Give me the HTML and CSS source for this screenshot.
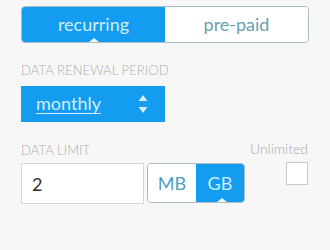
FILE: index.html
```html
<!DOCTYPE html>
<html>
<head>
<meta charset="utf-8">
<link rel="stylesheet" href="styles.css">
</head>
<body>
<div class="panel">
  <div class="segmented">
    <div class="seg seg-on">recurring<span class="notch-down"></span></div>
    <div class="seg seg-off">pre-paid</div>
  </div>

  <div class="label renew-label">DATA RENEWAL PERIOD</div>
  <div class="select">
    <span class="select-text">monthly</span>
    <svg class="arrows" width="10" height="20" viewBox="0 0 10 20">
      <path d="M5 1 L9.5 7 L0.5 7 Z" fill="#d4eefc"/>
      <path d="M5 19 L9.5 13 L0.5 13 Z" fill="#d4eefc"/>
    </svg>
  </div>

  <div class="limit">
    <div class="limit-left">
      <div class="label">DATA LIMIT</div>
      <div class="limit-row">
        <div class="input">2</div>
        <div class="units">
          <div class="unit unit-off">MB</div>
          <div class="unit unit-on">GB<span class="notch-up"></span></div>
        </div>
      </div>
    </div>
    <div class="limit-right">
      <div class="unl">Unlimited</div>
      <div class="checkbox"></div>
    </div>
  </div>
</div>
</body>
</html>
```

FILE: styles.css
```css
html, body {
  margin: 0;
  padding: 0;
  background: #f7f7f7;
}
body {
  font-family: Lato, "Open Sans", sans-serif;
}
.panel {
  width: 288px;
  padding: 6px 0 0 21px;
}
.segmented {
  display: flex;
  height: 37px;
  border: 1px solid #a7bcc6;
  border-radius: 4px;
  box-sizing: border-box;
  overflow: hidden;
}
.seg {
  position: relative;
  flex: 1;
  display: flex;
  align-items: center;
  justify-content: center;
  font-size: 18px;
  padding-bottom: 1px;
}
.seg-on {
  background: #139cf0;
  color: #cdeefc;
}
.seg-off {
  background: #ffffff;
  color: #6a9fb0;
}
.notch-down {
  position: absolute;
  left: 67px;
  bottom: 0;
  width: 0;
  height: 0;
  border-left: 5px solid transparent;
  border-right: 5px solid transparent;
  border-bottom: 4px solid #f2f6f8;
}
.label {
  font-size: 13px;
  color: #aeaeae;
  letter-spacing: 0.1px;
  font-weight: 300;
}
.renew-label {
  margin-top: 20px;
  line-height: 15px;
}
.select {
  margin-top: 8px;
  width: 144px;
  height: 36px;
  background: #139cf0;
  box-sizing: border-box;
  display: flex;
  align-items: center;
  justify-content: space-between;
  padding: 0 17px 0 15px;
}
.select-text {
  color: #d4eefc;
  font-size: 18px;
  text-decoration: underline;
  text-underline-offset: 3px;
  text-decoration-thickness: 1px;
  padding-bottom: 2px;
}
.arrows {
  display: block;
}
.limit {
  margin-top: 21px;
  display: flex;
  justify-content: space-between;
}
.limit-left .label {
  line-height: 15px;
}
.limit-row {
  display: flex;
  gap: 3px;
  margin-top: 5px;
}
.input {
  width: 123px;
  height: 41px;
  box-sizing: border-box;
  background: #ffffff;
  border: 1px solid #d6d6d6;
  font-size: 18px;
  color: #2f2f2f;
  display: flex;
  align-items: center;
  padding-left: 10px;
}
.units {
  display: flex;
  width: 98px;
  height: 40px;
  box-sizing: border-box;
  border: 1px solid #a7bcc6;
  border-radius: 4px;
  overflow: hidden;
}
.unit {
  position: relative;
  flex: 1;
  display: flex;
  align-items: center;
  justify-content: center;
  font-size: 18px;
}
.unit-off {
  background: #ffffff;
  color: #4e9fc0;
}
.unit-on {
  background: #139cf0;
  color: #cdeefc;
}
.notch-up {
  position: absolute;
  left: 21px;
  bottom: 0;
  width: 0;
  height: 0;
  border-left: 5px solid transparent;
  border-right: 5px solid transparent;
  border-bottom: 4px solid #f2f6f8;
}
.limit-right {
  display: flex;
  flex-direction: column;
  align-items: flex-end;
  padding-right: 1px;
}
.unl {
  font-size: 14px;
  color: #ababab;
  font-weight: 300;
  line-height: 16px;
  margin-top: -2px;
}
.checkbox {
  margin-top: 5px;
  width: 22px;
  height: 23px;
  box-sizing: border-box;
  background: #ffffff;
  border: 1px solid #c9c9c9;
}
```
